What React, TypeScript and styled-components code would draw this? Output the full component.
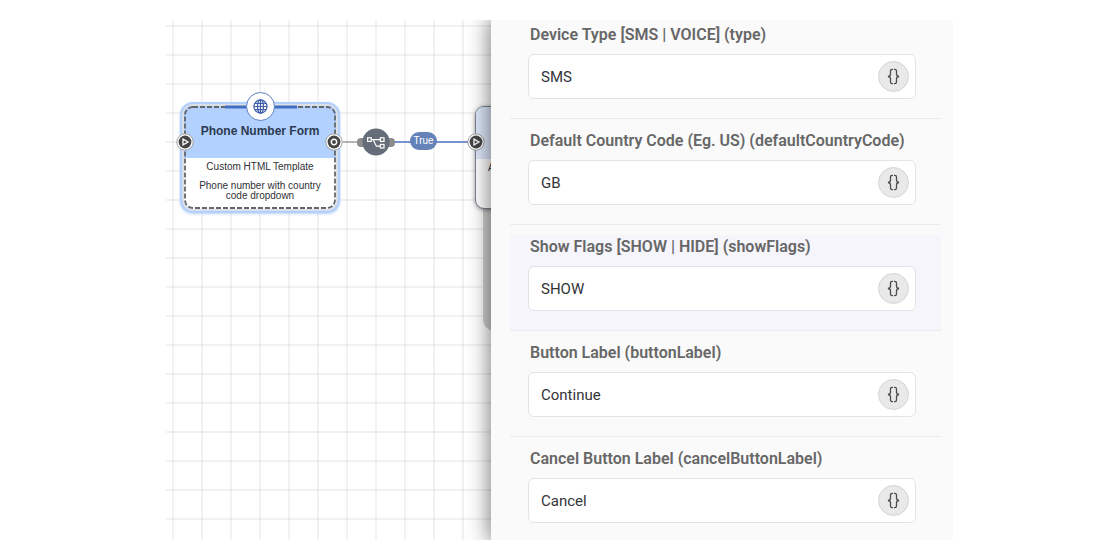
import React from "react";
import styled, { createGlobalStyle, css } from "styled-components";

const GlobalStyle = createGlobalStyle`
  *, *::before, *::after { box-sizing: border-box; }
  body { margin: 0; background: #ffffff; }
`;

const Page = styled.div`
  height: 100vh;
  padding: 20px 21px 20px 20px;
`;

const Workspace = styled.main`
  display: flex;
  max-width: 787px;
  height: 100%;
  margin: 0 auto;
  overflow: hidden;
  font-family: Roboto, "Liberation Sans", sans-serif;
`;

const Canvas = styled.section`
  position: relative;
  flex: 1 1 0;
  min-width: 0;
  background-color: #ffffff;
  background-image: linear-gradient(90deg, rgba(0, 0, 0, 0.05) 2px, transparent 2px),
    linear-gradient(rgba(0, 0, 0, 0.05) 2px, transparent 2px);
  background-size: 29px 29px;
  background-position: 6px 5px;
  font-family: "Liberation Sans", Arial, sans-serif;
`;

const GroupShade = styled.div`
  position: absolute;
  left: 317px;
  top: 110px;
  width: 160px;
  height: 201px;
  border-radius: 0 0 12px 12px;
  background: #d0d0d0;
`;

const Wires = styled.svg`
  position: absolute;
  left: 0;
  top: 0;
  width: 325px;
  height: 200px;
`;

const NodeCard = styled.article<{ $x: number; $y: number; $selected?: boolean }>`
  position: absolute;
  left: ${(p) => p.$x}px;
  top: ${(p) => p.$y}px;
  width: 152px;
  height: 103px;
  border-radius: 9px;
  background: #ffffff;
  color: #303236;
  text-align: center;
  ${(p) =>
    p.$selected
      ? css`
          box-shadow: 0 0 0 2px #dcdfe4, 0 0 0 4px #b1cfff, 0 1px 3px 4px rgba(140, 180, 240, 0.6);
        `
      : css`
          border: 1px solid #7a828e;
          box-shadow: 0 1px 4px rgba(0, 0, 0, 0.4);
        `}
`;

const NodeHeader = styled.header<{ $selected?: boolean }>`
  display: flex;
  align-items: center;
  justify-content: center;
  height: 52px;
  padding-bottom: 2px;
  border-radius: 8px 8px 0 0;
  background: ${(p) => (p.$selected ? "#b3d1ff" : "#dde8fb")};
`;

const NodeTitle = styled.h2`
  margin: 0;
  font-size: 12px;
  line-height: 16px;
  font-weight: 700;
  color: #2b3a50;
`;

const NodeText = styled.p<{ $start?: boolean }>`
  margin: 0;
  padding: 4px 12px 0;
  font-size: 10px;
  line-height: 10px;
  text-align: ${(p) => (p.$start ? "left" : "center")};

  & + & {
    padding-top: 9px;
  }
`;

const NodeOutline = styled.svg`
  position: absolute;
  inset: 0;
  width: 100%;
  height: 100%;
  overflow: visible;
`;

const NodeBadge = styled.div`
  position: absolute;
  left: 62px;
  top: -14px;
  display: flex;
  align-items: center;
  justify-content: center;
  width: 29px;
  height: 29px;
  border: 1px solid #5c7fc4;
  border-radius: 50%;
  background: #ffffff;
`;

const EdgeLabel = styled.span`
  position: absolute;
  left: 244px;
  top: 112px;
  width: 27px;
  height: 18px;
  border-radius: 9px;
  background: #6582b9;
  color: #ffffff;
  font-size: 10px;
  line-height: 18px;
  text-align: center;
`;

const Panel = styled.aside`
  position: relative;
  flex: 0 1 462px;
  min-width: 0;
  padding: 3px 12px 0 19px;
  background: #fafafa;
  box-shadow: 0 0 20px 2px rgba(0, 0, 0, 0.5);
`;

const FieldList = styled.form`
  display: flex;
  flex-direction: column;
  gap: 10px;
`;

const Field = styled.div<{ $active?: boolean }>`
  padding: 0 25px 19px 18px;
  border-bottom: 1px solid #eaeaf1;
  background: ${(p) => (p.$active ? "#f5f5fb" : "transparent")};
`;

const FieldLabel = styled.label`
  display: block;
  padding: 2px 2px 9px;
  color: #676767;
  font-size: 16px;
  line-height: 20px;
  font-weight: 600;
  white-space: nowrap;
`;

const InputBox = styled.div`
  display: flex;
  align-items: center;
  height: 45px;
  padding: 0 6px 0 12px;
  border: 1px solid #e4e4e8;
  border-radius: 6px;
  background: #ffffff;
`;

const TextInput = styled.input`
  flex: 1 1 0;
  min-width: 0;
  padding: 0;
  border: 0;
  outline: 0;
  background: transparent;
  color: #333438;
  font-family: inherit;
  font-size: 15px;
  line-height: 20px;
`;

const VariableButton = styled.button`
  display: flex;
  align-items: center;
  justify-content: center;
  width: 31px;
  height: 31px;
  padding: 0;
  border: 1px solid #d8d4d6;
  border-radius: 50%;
  background: #e9e9e9;
  color: #4c4c4c;
`;

const BracesIcon = () => (
  <svg width="15" height="17" viewBox="0 0 15 17" fill="none" stroke="currentColor" strokeWidth="1.3" aria-hidden="true">
    <path d="M7 1.3H6.2Q4.5 1.3 4.5 3.1V6.3Q4.5 8.1 2 8.5Q4.5 8.9 4.5 10.7V13.9Q4.5 15.7 6.2 15.7H7" />
    <path d="M8 1.3H8.8Q10.5 1.3 10.5 3.1V6.3Q10.5 8.1 13 8.5Q10.5 8.9 10.5 10.7V13.9Q10.5 15.7 8.8 15.7H8" />
  </svg>
);

const GlobeIcon = () => (
  <svg width="15" height="15" viewBox="0 0 16 16" fill="none" stroke="#3f5fa9" strokeWidth="1.3" aria-hidden="true">
    <circle cx="8" cy="8" r="7" />
    <ellipse cx="8" cy="8" rx="3.2" ry="7" />
    <path d="M8 1V15M1 8H15M2.2 4.7H13.8M2.2 11.3H13.8" />
  </svg>
);

const Port = ({ x, y, kind }: { x: number; y: number; kind: "in" | "out" }) => (
  <g transform={`translate(${x} ${y})`}>
    <circle r="8.2" fill="#fff" stroke="#8b8b8b" strokeWidth="0.8" />
    <circle r="6.4" fill="#454545" />
    {kind === "in" ? (
      <path d="M-2 -2.9L3 0L-2 2.9Z" fill="none" stroke="#fff" strokeWidth="1.3" />
    ) : (
      <circle r="2.7" fill="none" stroke="#fff" strokeWidth="1.5" />
    )}
  </g>
);

const fields = [
  { id: "type", label: "Device Type [SMS | VOICE] (type)", value: "SMS" },
  { id: "defaultCountryCode", label: "Default Country Code (Eg. US) (defaultCountryCode)", value: "GB" },
  { id: "showFlags", label: "Show Flags [SHOW | HIDE] (showFlags)", value: "SHOW", active: true },
  { id: "buttonLabel", label: "Button Label (buttonLabel)", value: "Continue" },
  { id: "cancelButtonLabel", label: "Cancel Button Label (cancelButtonLabel)", value: "Cancel" },
];

export default function App() {
  return (
    <>
      <GlobalStyle />
      <Page>
        <Workspace>
          <Canvas aria-label="Flow canvas">
            <GroupShade />
            <NodeCard $x={18} $y={86} $selected>
              <NodeHeader $selected>
                <NodeTitle>Phone Number Form</NodeTitle>
              </NodeHeader>
              <NodeText>Custom HTML Template</NodeText>
              <NodeText>Phone number with country code dropdown</NodeText>
              <NodeOutline aria-hidden="true">
                <rect x="1" y="1" width="150" height="101" rx="8" fill="none" stroke="#63666b" strokeWidth="1.8" strokeDasharray="5 2" />
                <path d="M41 1H113" stroke="#416fc2" strokeWidth="3" />
              </NodeOutline>
              <NodeBadge>
                <GlobeIcon />
              </NodeBadge>
            </NodeCard>
            <NodeCard $x={309} $y={86}>
              <NodeHeader />
              <NodeText $start>A</NodeText>
            </NodeCard>
            <Wires viewBox="0 0 325 200" aria-hidden="true">
              <path d="M177 122H196" stroke="#a3a3a3" strokeWidth="1.6" />
              <path d="M226 122H302" stroke="#7593cf" strokeWidth="2" />
              <rect x="191" y="118" width="38" height="9" rx="4" fill="#8c8c8c" />
              <circle cx="210" cy="122" r="13.6" fill="#656e78" />
              <g fill="none" stroke="#fff" strokeWidth="1.2">
                <rect x="201.6" y="117.8" width="3.6" height="3.6" />
                <rect x="214.4" y="117.8" width="3.6" height="3.6" />
                <rect x="214.4" y="124.4" width="3.6" height="3.6" />
                <path d="M205.2 119.6H214.4M207 119.6L210.4 126.2H214.4" />
              </g>
              <Port x={19} y={122} kind="in" />
              <Port x={168} y={122} kind="out" />
              <Port x={310} y={122} kind="in" />
            </Wires>
            <EdgeLabel>True</EdgeLabel>
          </Canvas>
          <Panel>
            <FieldList>
              {fields.map((f) => (
                <Field key={f.id} $active={f.active}>
                  <FieldLabel htmlFor={f.id}>{f.label}</FieldLabel>
                  <InputBox>
                    <TextInput id={f.id} type="text" defaultValue={f.value} />
                    <VariableButton type="button" aria-label={`Insert variable into ${f.id}`}>
                      <BracesIcon />
                    </VariableButton>
                  </InputBox>
                </Field>
              ))}
            </FieldList>
          </Panel>
        </Workspace>
      </Page>
    </>
  );
}
